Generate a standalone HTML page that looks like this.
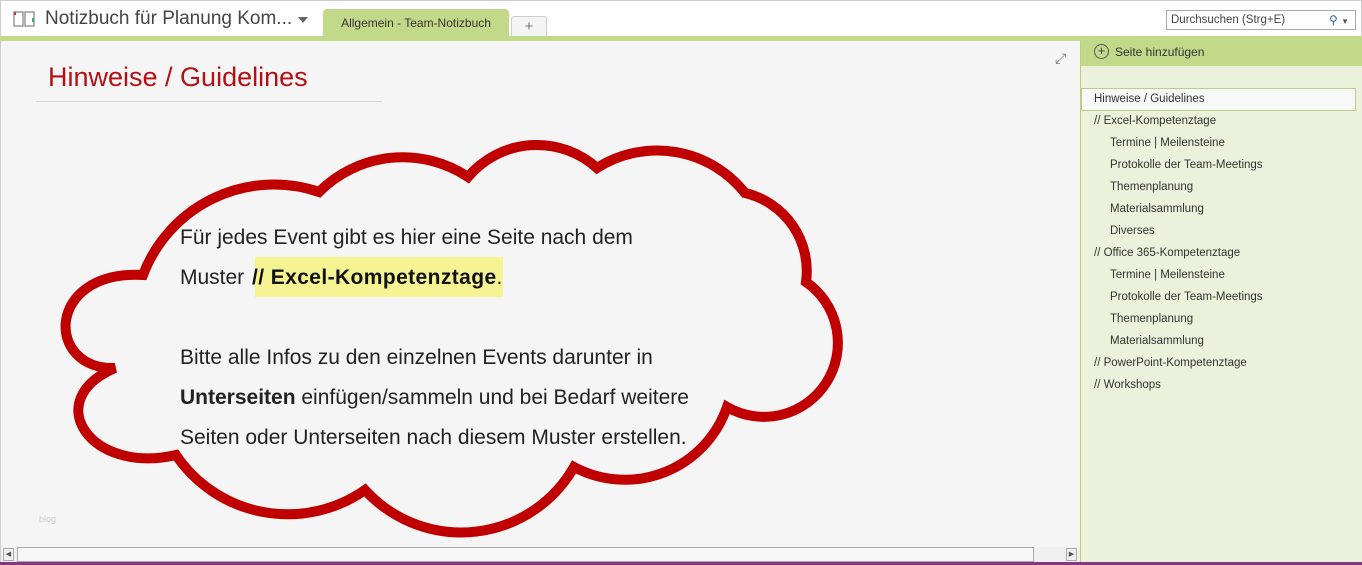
<!DOCTYPE html>
<html><head><meta charset="utf-8"><style>
*{margin:0;padding:0;box-sizing:border-box}
body{width:1362px;height:565px;overflow:hidden;background:#f5f5f5;font-family:"Liberation Sans",sans-serif;position:relative}
.abs{position:absolute}
#top{left:0;top:0;width:1362px;height:36px;background:#fff;border-top:1px solid #ccc;border-left:1px solid #ccc;border-right:1px solid #ccc}
#gline{left:0;top:36px;width:1362px;height:5px;background:#c3d98a}
.side{left:1080px;top:41px;width:282px;height:524px;background:#ebf1da;border-left:1px solid #b9cf85}
.item{position:absolute;font-size:11.5px;color:#333;white-space:nowrap}
</style></head><body>
<div id="top" class="abs"></div>
<svg class="abs" style="left:13px;top:10px" width="24" height="20"><rect x="1" y="2" width="9" height="14" fill="none" stroke="#888" stroke-width="1.3"/><rect x="12" y="2" width="9" height="14" fill="none" stroke="#888" stroke-width="1.3"/><rect x="1" y="2" width="2" height="3" fill="#c33"/><rect x="19" y="8" width="2" height="4" fill="#4a6"/></svg>
<div class="abs" style="left:45px;top:8px;font-size:19px;color:#444">Notizbuch für Planung Kom...</div>
<div class="abs" style="left:298px;top:17px;width:0;height:0;border-left:5px solid transparent;border-right:5px solid transparent;border-top:6px solid #666"></div>
<div class="abs" style="left:323px;top:9px;width:186px;height:28px;background:#c3d98a;border-radius:4px 4px 0 0;font-size:12px;color:#333;text-align:center;line-height:28px">Allgemein - Team-Notizbuch</div>
<div class="abs" style="left:511px;top:16px;width:36px;height:21px;border:1px solid #ccc;border-bottom:none;border-radius:3px 3px 0 0;background:#f4f4f4;font-size:15px;color:#777;text-align:center;line-height:20px">+</div>
<div class="abs" style="left:1166px;top:10px;width:190px;height:20px;border:1px solid #aaa;background:#fff;font-size:11.5px;color:#444;line-height:18px;padding-left:4px">Durchsuchen (Strg+E)<span style="position:absolute;right:6px;top:0;color:#2a63b8;font-size:12px">⚲ <span style="color:#555;font-size:8px">▼</span></span></div>
<div id="gline" class="abs"></div>
<div class="abs" style="left:0;top:41px;width:1px;height:524px;background:#ccc"></div>

<div class="abs" style="left:48px;top:62px;font-size:27px;color:#b50f14">Hinweise / Guidelines</div>
<div class="abs" style="left:36px;top:101px;width:346px;height:1px;background:#d8d8d8"></div>
<div class="abs" style="left:1055px;top:50px;font-size:14px;color:#777">⤢</div>

<svg class="abs" style="left:0;top:0" width="1080" height="565">
<path d="M143,275 A140,140 0 0 1 319,192 A118,118 0 0 1 468,177 A90,90 0 0 1 597,168 A112,112 0 0 1 745,193 A80,80 0 0 1 806,282 A74,74 0 0 1 727,407 A108,108 0 0 1 574,467 A130,130 0 0 1 365,490 A135,135 0 0 1 176,455 C90,475 40,400 115,368 C45,370 45,270 143,275 Z" fill="#f5f5f5" stroke="#c00000" stroke-width="10"/>
</svg>
<div class="abs" style="left:255px;top:257px;width:248px;height:40px;background:#f6f393"></div>
<div class="abs" style="left:180px;top:218px;font-size:21px;color:#222;line-height:40px;white-space:nowrap">
Für jedes Event gibt es hier eine Seite nach dem<br>
Muster <span style="font-weight:bold;color:#111;margin-left:2px;letter-spacing:0.4px">// Excel-Kompetenztage</span>.<br><br>
Bitte alle Infos zu den einzelnen Events darunter in<br>
<b>Unterseiten</b> einfügen/sammeln und bei Bedarf weitere<br>
Seiten oder Unterseiten nach diesem Muster erstellen.
</div>
<div class="abs" style="left:39px;top:514px;font-size:9px;color:#ccc">blog</div>

<div class="abs" style="left:2px;top:547px;width:1078px;height:15px;background:#f0f0f0"></div>
<div class="abs" style="left:17px;top:547px;width:1017px;height:15px;border:1px solid #aaa;background:#f7f7f7"></div>
<div class="abs" style="left:3px;top:548px;width:11px;height:13px;border:1px solid #aaa;font-size:7px;line-height:11px;text-align:center;color:#555">◀</div>
<div class="abs" style="left:1066px;top:548px;width:11px;height:13px;border:1px solid #aaa;font-size:7px;line-height:11px;text-align:center;color:#555">▶</div>

<div class="abs side"></div>
<div class="abs" style="left:1081px;top:41px;width:281px;height:25px;background:#c3d98a"></div>
<div class="abs" style="left:1094px;top:44px;width:15px;height:15px;border:1.5px solid #555;border-radius:50%;font-size:13px;line-height:11px;text-align:center;color:#444">+</div>
<div class="item" style="left:1115px;top:45px;font-size:12px">Seite hinzufügen</div>
<div class="abs" style="left:1081px;top:88px;width:275px;height:23px;background:#f8f8f8;border:1px solid #b9cf85"></div>
<div class="item" style="left:1094px;top:93px">Hinweise / Guidelines</div>
<div class="item" style="left:1094px;top:115px">// Excel-Kompetenztage</div>
<div class="item" style="left:1110px;top:137px">Termine | Meilensteine</div>
<div class="item" style="left:1110px;top:159px">Protokolle der Team-Meetings</div>
<div class="item" style="left:1110px;top:181px">Themenplanung</div>
<div class="item" style="left:1110px;top:203px">Materialsammlung</div>
<div class="item" style="left:1110px;top:225px">Diverses</div>
<div class="item" style="left:1094px;top:247px">// Office 365-Kompetenztage</div>
<div class="item" style="left:1110px;top:269px">Termine | Meilensteine</div>
<div class="item" style="left:1110px;top:291px">Protokolle der Team-Meetings</div>
<div class="item" style="left:1110px;top:313px">Themenplanung</div>
<div class="item" style="left:1110px;top:335px">Materialsammlung</div>
<div class="item" style="left:1094px;top:357px">// PowerPoint-Kompetenztage</div>
<div class="item" style="left:1094px;top:379px">// Workshops</div>
<div class="abs" style="left:0;top:562px;width:1362px;height:3px;background:#80397b"></div>
</body></html>
